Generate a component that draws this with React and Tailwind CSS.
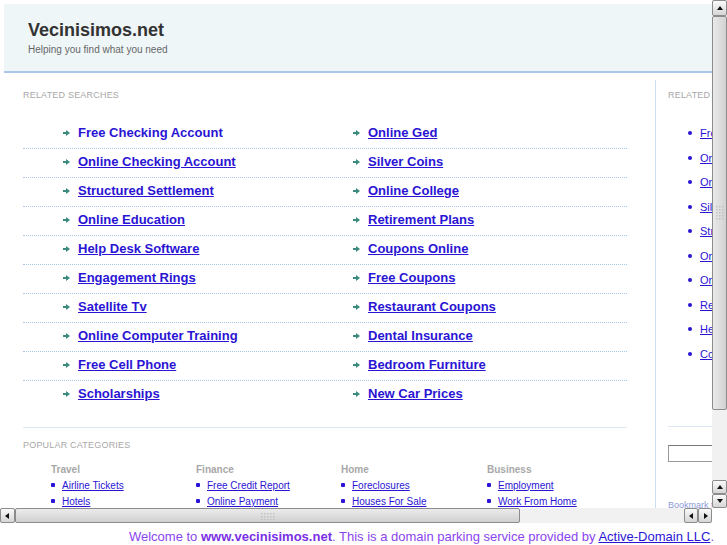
import React from "react";

const leftLinks = [
  "Free Checking Account",
  "Online Checking Account",
  "Structured Settlement",
  "Online Education",
  "Help Desk Software",
  "Engagement Rings",
  "Satellite Tv",
  "Online Computer Training",
  "Free Cell Phone",
  "Scholarships",
];

const rightLinks = [
  "Online Ged",
  "Silver Coins",
  "Online College",
  "Retirement Plans",
  "Coupons Online",
  "Free Coupons",
  "Restaurant Coupons",
  "Dental Insurance",
  "Bedroom Furniture",
  "New Car Prices",
];

const sideLinks = [
  "Free Checking Account",
  "Online Checking Account",
  "Online Ged",
  "Silver Coins",
  "Structured Settlement",
  "Online College",
  "Online Education",
  "Retirement Plans",
  "Help Desk Software",
  "Coupons Online",
];

const categories = [
  { title: "Travel", items: ["Airline Tickets", "Hotels", "Car Rental"] },
  { title: "Finance", items: ["Free Credit Report", "Online Payment", "Credit Card Application"] },
  { title: "Home", items: ["Foreclosures", "Houses For Sale", "Mortgage"] },
  { title: "Business", items: ["Employment", "Work From Home", "Small Business"] },
];

const Arrow = () => (
  <svg width="7" height="6" viewBox="0 0 7 6" className="shrink-0">
    <rect x="0" y="2" width="3.5" height="2" fill="#3b8a7e" />
    <polygon points="3,0 7,3 3,6" fill="#3b8a7e" />
  </svg>
);

const Grip = ({ vertical }) => (
  <svg width={vertical ? 10 : 16} height={vertical ? 16 : 8} className="opacity-70">
    {(vertical ? [0, 1, 2] : [0, 1, 2, 3, 4]).map((c) =>
      (vertical ? [0, 1, 2, 3, 4] : [0, 1, 2]).map((r) => (
        <rect key={`${c}-${r}`} x={1 + c * 3} y={1 + r * 3} width="1.5" height="1.5" fill="#b8b8b8" />
      ))
    )}
  </svg>
);

const ScrollBtn = ({ dir, className = "" }) => {
  const tri = {
    up: "1,5 4,1 7,5",
    down: "1,1 4,5 7,1",
    left: "5,1 1,4 5,7",
    right: "2,1 6,4 2,7",
  }[dir];
  const flat = dir === "up" || dir === "down";
  return (
    <div
      className={`flex items-center justify-center rounded-[2px] border border-[#8c8c8c] bg-gradient-to-b from-[#fafafa] to-[#d6d6d6] ${className}`}
    >
      <svg width={flat ? 8 : 7} height={flat ? 6 : 8}>
        <polygon points={tri} fill="#111" />
      </svg>
    </div>
  );
};

const Heading = ({ children, className = "" }) => (
  <div className={`text-[9px] leading-[11px] tracking-[0.2px] text-[#a8a8a8] uppercase ${className}`}>{children}</div>
);

const App = () => {
  return (
    <div className="w-[727px] h-[545px] overflow-hidden bg-white font-['Liberation_Sans',Arial,sans-serif] flex flex-col">
      {/* main frame */}
      <div className="h-[523px] flex flex-col">
        <div className="flex h-[508px]">
          <div className="w-[712px] overflow-hidden">
            <div className="w-[860px] pl-[4px] pt-[4px]">
              {/* header */}
              <div className="h-[69px] bg-[#eff6f8] border-b-2 border-[#aac6ea] pl-[24px] pt-[16px]">
                <div className="text-[18px] leading-[21px] font-bold text-[#333]">Vecinisimos.net</div>
                <div className="mt-[3px] text-[10px] leading-[12px] text-[#666]">Helping you find what you need</div>
              </div>

              <div className="flex mt-[7px]">
                {/* left column */}
                <div className="w-[651px] shrink-0 pl-[19px] pr-[28px] pt-[10px]">
                  <Heading>Related Searches</Heading>
                  <div className="mt-[19px]">
                    {leftLinks.map((l, i) => (
                      <div
                        key={l}
                        className={`flex pt-[5px] pb-[7px] text-[13px] leading-[16px] font-bold ${
                          i < leftLinks.length - 1 ? "border-b border-dotted border-[#a9c7ec]" : "pb-[8px]"
                        }`}
                      >
                        <div className="w-[330px] pl-[40px] flex items-center gap-[8px]">
                          <Arrow />
                          <a className={`text-[#2a14d4] ${i === 0 ? "" : "underline"}`}>{l}</a>
                        </div>
                        <div className="flex items-center gap-[8px]">
                          <Arrow />
                          <a className="text-[#2a14d4] underline">{rightLinks[i]}</a>
                        </div>
                      </div>
                    ))}
                  </div>
                  <div className="mt-[17px] border-t border-[#dde7f3]" />
                  <Heading className="mt-[12px]">Popular Categories</Heading>
                  <div className="mt-[13px] pl-[28px] grid grid-cols-[145px_145px_146px_145px]">
                    {categories.map((c) => (
                      <div key={c.title}>
                        <div className="text-[10px] leading-[12px] font-bold text-[#a8a8a8]">{c.title}</div>
                        <ul className="mt-[1px]">
                          {c.items.map((it) => (
                            <li key={it} className="flex items-center gap-[7px] h-[16px] text-[10px]">
                              <span className="w-[4px] h-[4px] rounded-[1px] bg-[#2a14d4] shrink-0" />
                              <a className="text-[#2a14d4] underline">{it}</a>
                            </li>
                          ))}
                        </ul>
                      </div>
                    ))}
                  </div>
                </div>

                {/* sidebar */}
                <div className="w-[180px] shrink-0 border-l border-[#cddcf0] pl-[12px] pt-[10px] pb-[40px]">
                  <Heading>Related Searches</Heading>
                  <ul className="mt-[20px] pl-[20px]">
                    {sideLinks.map((l) => (
                      <li key={l} className="h-[24.5px] flex items-center gap-[8px] text-[11px]">
                        <span className="w-[4px] h-[4px] rounded-full bg-[#2a14d4] shrink-0" />
                        <a className="text-[#2a14d4] underline whitespace-nowrap">{l}</a>
                      </li>
                    ))}
                  </ul>
                  <div className="mt-[60px] border-t border-[#dde7f3]" />
                  <div className="mt-[18px] h-[17px] w-[130px] border border-[#9a9a9a] border-t-[#777]" />
                  <div className="mt-[38px] text-[9px] leading-[11px] text-[#8c9ad8]">Bookmark this page</div>
                </div>
              </div>
            </div>
          </div>

          {/* vertical scrollbar */}
          <div className="w-[15px] flex flex-col bg-[#ececec]">
            <ScrollBtn dir="up" className="h-[16px]" />
            <div className="h-[394px] rounded-[2px] border border-[#8c8c8c] bg-gradient-to-r from-[#e9e9e9] via-[#dedede] to-[#d2d2d2] flex items-center justify-center">
              <Grip vertical />
            </div>
            <div className="flex-1 bg-[#f1f1f1]" />
            <ScrollBtn dir="up" className="h-[14px]" />
            <ScrollBtn dir="down" className="h-[14px]" />
          </div>
        </div>

        {/* horizontal scrollbar */}
        <div className="h-[15px] flex">
          <div className="w-[712px] flex bg-[#f1f1f1]">
            <ScrollBtn dir="left" className="w-[15px]" />
            <div className="w-[505px] rounded-[2px] border border-[#8c8c8c] bg-gradient-to-b from-[#ebebeb] via-[#dedede] to-[#d0d0d0] flex items-center justify-center">
              <Grip />
            </div>
            <div className="flex-1" />
            <ScrollBtn dir="left" className="w-[14px]" />
            <ScrollBtn dir="right" className="w-[14px]" />
          </div>
          <div className="flex-1 bg-white" />
        </div>
      </div>

      {/* bottom frame */}
      <div className="flex-1 flex justify-end pr-[13px] pt-[6px] text-[13px] leading-[16px] whitespace-nowrap text-[#8a44f0]">
        <span>
          Welcome to <b className="text-[#7a2fe6]">www.vecinisimos.net</b>. This is a domain parking service provided by{" "}
          <a className="text-[#2a14d4] underline">Active-Domain LLC</a>.
        </span>
      </div>
    </div>
  );
};

export default App;
